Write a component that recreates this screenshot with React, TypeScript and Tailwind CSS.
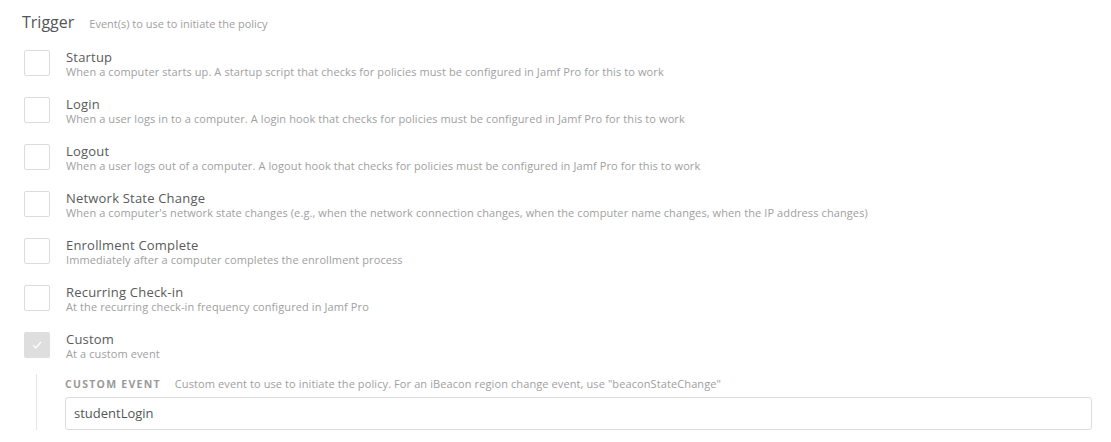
import React from "react";

type TriggerItem = {
  title: string;
  description: string;
  checked?: boolean;
};

const triggers: TriggerItem[] = [
  {
    title: "Startup",
    description:
      "When a computer starts up. A startup script that checks for policies must be configured in Jamf Pro for this to work",
  },
  {
    title: "Login",
    description:
      "When a user logs in to a computer. A login hook that checks for policies must be configured in Jamf Pro for this to work",
  },
  {
    title: "Logout",
    description:
      "When a user logs out of a computer. A logout hook that checks for policies must be configured in Jamf Pro for this to work",
  },
  {
    title: "Network State Change",
    description:
      "When a computer's network state changes (e.g., when the network connection changes, when the computer name changes, when the IP address changes)",
  },
  {
    title: "Enrollment Complete",
    description: "Immediately after a computer completes the enrollment process",
  },
  {
    title: "Recurring Check-in",
    description: "At the recurring check-in frequency configured in Jamf Pro",
  },
  { title: "Custom", description: "At a custom event", checked: true },
];

const Checkbox = ({ checked }: { checked?: boolean }) =>
  checked ? (
    <div className="flex h-[26px] w-[26px] shrink-0 items-center justify-center rounded-[2px] bg-[#dedede]">
      <svg width="10" height="8" viewBox="0 0 10 8" fill="none">
        <path d="M1 4.2L3.8 7L9 1" stroke="#fff" strokeWidth="1.2" />
      </svg>
    </div>
  ) : (
    <div className="h-[26px] w-[26px] shrink-0 rounded-[2px] border border-[#dcdcdc] bg-white" />
  );

export default function App() {
  return (
    <div className="h-[442px] w-[1111px] overflow-hidden bg-white pl-[22px] pr-[19px] pt-[10px] font-['Open_Sans',sans-serif]">
      <div className="flex items-baseline gap-[15px]">
        <h2 className="text-[16px] leading-[24px] text-[#555]">Trigger</h2>
        <span className="text-[11px] text-[#a0a0a0]">Event(s) to use to initiate the policy</span>
      </div>

      <div className="mt-[16px] flex flex-col gap-[18px] pl-[2px]">
        {triggers.map((t) => (
          <div key={t.title} className="flex items-start gap-[16px]">
            <Checkbox checked={t.checked} />
            <div className="flex flex-col">
              <div className="text-[13px] leading-[15px] tracking-[0.2px] text-[#5a5a5a]">{t.title}</div>
              <div className="text-[11px] leading-[14px] tracking-[0.1px] text-[#a0a0a0]">{t.description}</div>
            </div>
          </div>
        ))}
      </div>

      <div className="ml-[14px] mt-[13px] flex border-l border-[#e6e6e6] pl-[28px] pt-[2px]">
        <div className="flex flex-1 flex-col">
          <div className="flex items-baseline gap-[14px]">
            <span className="text-[10.5px] font-bold uppercase tracking-[0.12em] text-[#9a9a9a]">
              Custom Event
            </span>
            <span className="text-[11px] tracking-[0.1px] text-[#a0a0a0]">
              Custom event to use to initiate the policy. For an iBeacon region change event, use "beaconStateChange"
            </span>
          </div>
          <div className="mt-[4px] flex h-[33px] items-center rounded-[3px] border border-[#ddd] px-[8px] text-[13px] text-[#555]">
            studentLogin
          </div>
        </div>
      </div>
    </div>
  );
}
